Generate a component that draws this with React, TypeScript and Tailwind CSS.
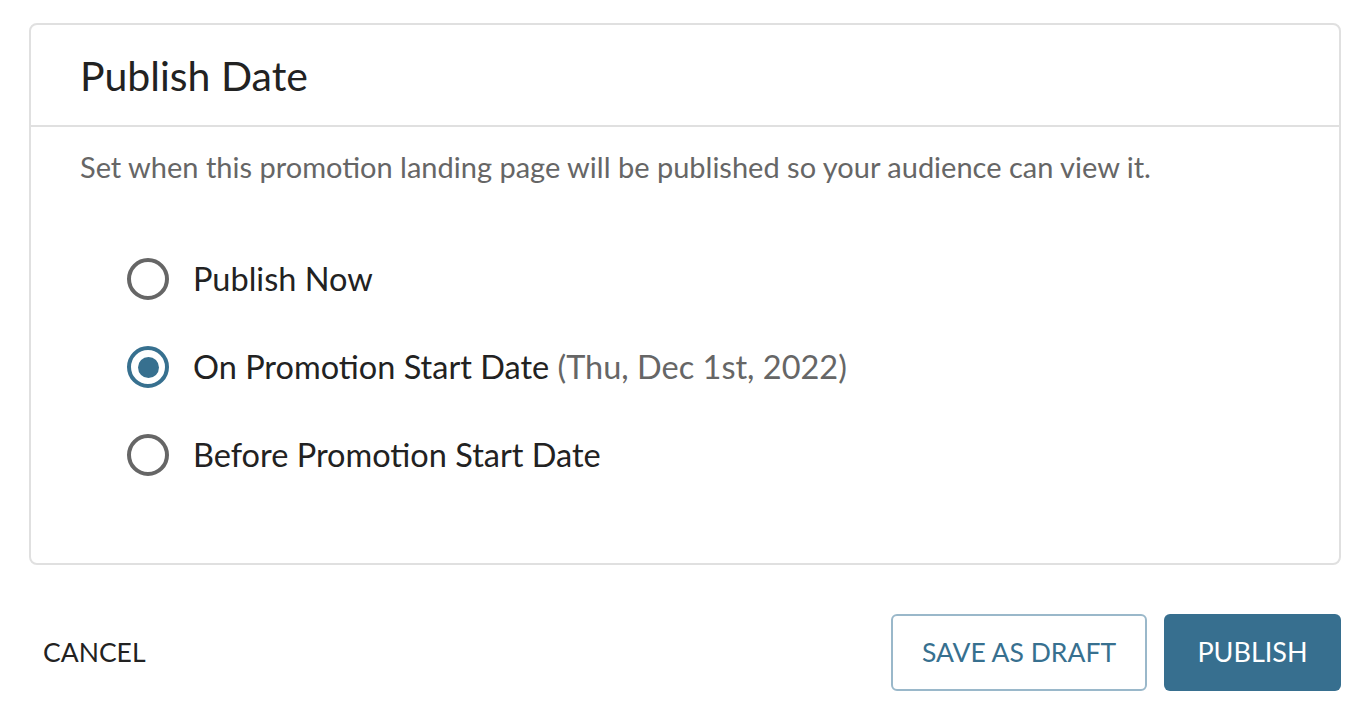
import { useState } from "react";

const options = [
  { id: "now", label: "Publish Now" },
  { id: "start", label: "On Promotion Start Date", note: "(Thu, Dec 1st, 2022)" },
  { id: "before", label: "Before Promotion Start Date" },
] as const;

export default function App() {
  const [selected, setSelected] = useState<string>("start");

  return (
    <div className="min-h-screen bg-white font-['Lato',sans-serif] text-[#222]">
      <div className="pl-[29px] pr-[17px] pt-[23px]">
        {/* Card */}
        <section className="h-[542px] rounded-lg border-2 border-[#e0e0e0]">
          <header className="flex h-[102px] items-center border-b-2 border-[#e0e0e0] px-[49px]">
            <h1 className="text-[41px] leading-none text-[#222]">Publish Date</h1>
          </header>
          <div className="px-[49px] pt-[22px]">
            <p className="text-[29px] leading-[36px] text-[#666]">
              Set when this promotion landing page will be published so your audience can view it.
            </p>
            <div className="mt-[73px] flex flex-col gap-[46px] pl-[47px]">
              {options.map((o) => {
                const on = selected === o.id;
                return (
                  <label
                    key={o.id}
                    className="flex h-[42px] cursor-pointer items-center gap-[24px]"
                    onClick={() => setSelected(o.id)}>
                    <span
                      className={`flex h-[42px] w-[42px] items-center justify-center rounded-full border-[4px] ${
                        on ? "border-[#37708f]" : "border-[#666]"
                      }`}>
                      {on && <span className="h-[21px] w-[21px] rounded-full bg-[#37708f]" />}
                    </span>
                    <span className="text-[32.5px] leading-none">
                      {o.label}
                      {"note" in o && <span className="text-[#666]"> {o.note}</span>}
                    </span>
                  </label>
                );
              })}
            </div>
          </div>
        </section>

        {/* Footer */}
        <footer className="mt-[49px] flex items-center justify-between">
          <button type="button" className="ml-[14px] text-[26.5px] text-[#222]">
            CANCEL
          </button>
          <div className="flex gap-[17px]">
            <button
              type="button"
              className="h-[77px] w-[256px] rounded-md border-2 border-[#9ab8ca] text-[26.5px] text-[#37708f]">
              SAVE AS DRAFT
            </button>
            <button
              type="button"
              className="h-[77px] w-[177px] rounded-md bg-[#376f8f] text-[27px] text-white">
              PUBLISH
            </button>
          </div>
        </footer>
      </div>
    </div>
  );
}
